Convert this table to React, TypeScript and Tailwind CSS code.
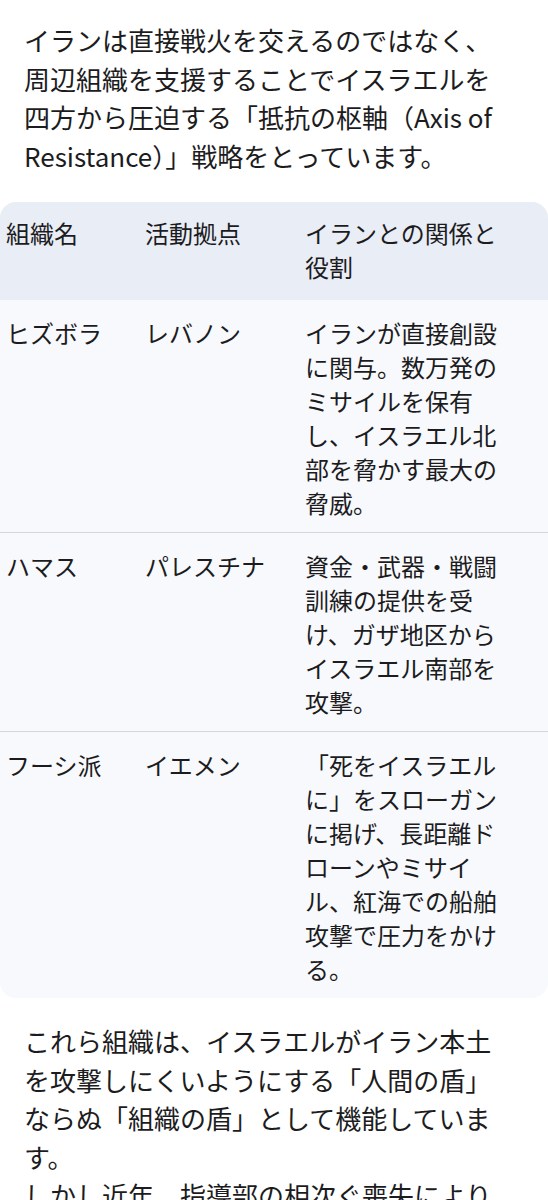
const rows = [
  {
    name: "ヒズボラ",
    base: "レバノン",
    role: "イランが直接創設に関与。数万発のミサイルを保有し、イスラエル北部を脅かす最大の脅威。",
  },
  {
    name: "ハマス",
    base: "パレスチナ",
    role: "資金・武器・戦闘訓練の提供を受け、ガザ地区からイスラエル南部を攻撃。",
  },
  {
    name: "フーシ派",
    base: "イエメン",
    role: "「死をイスラエルに」をスローガンに掲げ、長距離ドローンやミサイル、紅海での船舶攻撃で圧力をかける。",
  },
]

export default function App() {
  return (
    <div className="h-[1200px] overflow-hidden bg-white text-[#1c1c1e] font-['Noto_Sans_CJK_JP','Noto_Sans',sans-serif]">
      <p className="pl-6 pr-[36px] pt-[21px] text-[26px] leading-[38.5px]">
        イランは直接戦火を交えるのではなく、周辺組織を支援することでイスラエルを四方から圧迫する「抵抗の枢軸（Axis of Resistance）」戦略をとっています。
      </p>

      {/* table */}
      <div className="mt-[27px] overflow-hidden rounded-2xl bg-[#f8f9fc] text-[24px] leading-[34px]">
        <div className="grid grid-cols-[139px_160px_1fr] bg-[#e9edf5]">
          <div className="pl-[6px] pt-[14px] pb-[16px]">組織名</div>
          <div className="pl-[6px] pt-[14px] pb-[16px]">活動拠点</div>
          <div className="pl-[6px] pr-[40px] pt-[14px] pb-[16px]">イランとの関係と役割</div>
        </div>
        {rows.map((r, i) => (
          <div
            key={r.name}
            className={
              i > 0
                ? "grid grid-cols-[139px_160px_1fr] border-t border-[#d6d6d8]"
                : "grid grid-cols-[139px_160px_1fr]"
            }
          >
            <div className="pl-[6px] pt-[16px] pb-[12px]">{r.name}</div>
            <div className="pl-[6px] pt-[16px] pb-[12px]">{r.base}</div>
            <div className="pl-[6px] pr-[40px] pt-[16px] pb-[12px]">{r.role}</div>
          </div>
        ))}
      </div>

      <p className="mt-[24px] pl-6 pr-[36px] text-[26px] leading-[38.5px]">
        これら組織は、イスラエルがイラン本土を攻撃しにくいようにする「人間の盾」ならぬ「組織の盾」として機能しています。
      </p>
      <p className="pl-6 pr-[36px] text-[26px] leading-[38.5px]">
        しかし近年、指導部の相次ぐ喪失により抑止力は大きく揺らいでいます。
      </p>
    </div>
  )
}
